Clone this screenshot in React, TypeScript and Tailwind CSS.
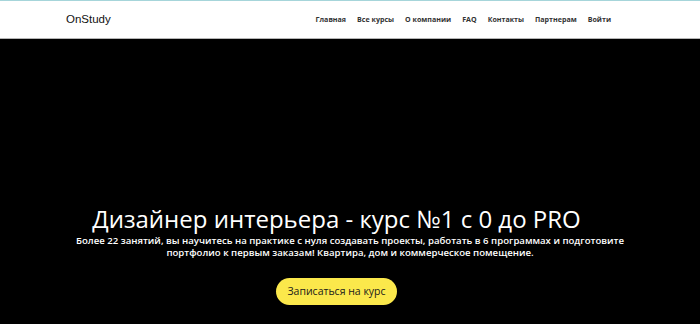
import React from "react";

const nav = ["Главная", "Все курсы", "О компании", "FAQ", "Контакты", "Партнерам", "Войти"];

export default function App() {
  return (
    <div className="w-[700px] h-[324px] overflow-hidden bg-black" style={{ fontFamily: '"Open Sans", sans-serif' }}>
      <header className="h-[39px] bg-white border-t border-t-[#a6d5da] border-b border-b-[#b5b5b5] flex items-center justify-between pl-[66px] pr-[89px]">
        <div className="text-[11.5px] text-[#111] leading-none" style={{ fontFamily: '"Liberation Sans", Arial, sans-serif' }}>
          OnStudy
        </div>
        <nav className="flex items-center gap-[11px]">
          {nav.map((n) => (
            <span key={n} className="text-[7.1px] font-bold text-[#333] leading-none">
              {n}
            </span>
          ))}
        </nav>
      </header>
      <section className="flex flex-col items-center pt-[165px] text-white">
        <h1 className="mr-[27px] text-[24px] leading-[30px] font-medium">Дизайнер интерьера - курс №1 с 0 до PRO</h1>
        <p className="mt-[1px] w-[590px] text-center text-[9.6px] leading-[12px] font-semibold">
          Более 22 занятий, вы научитесь на практике с нуля создавать проекты, работать в 6 программах и подготовите портфолио к первым заказам! Квартира, дом и коммерческое помещение.
        </p>
        <button className="mr-[27px] mt-[19px] h-[27px] w-[121px] rounded-full bg-[#fbe84b] text-[#1a1a1a] text-[10.5px] font-medium flex items-center justify-center">
          Записаться на курс
        </button>
      </section>
    </div>
  );
}
